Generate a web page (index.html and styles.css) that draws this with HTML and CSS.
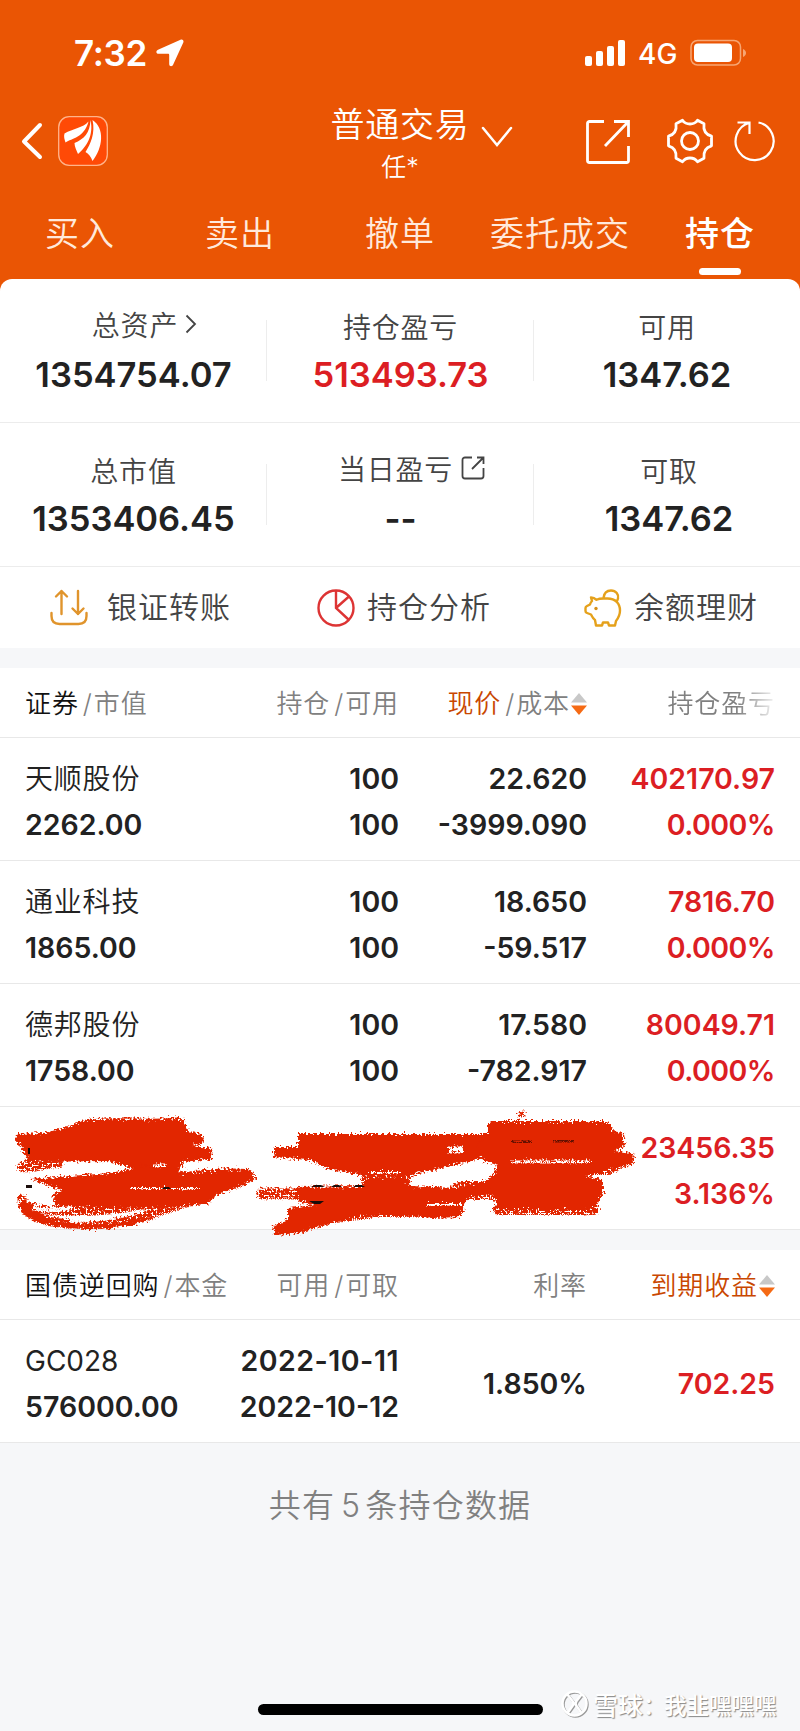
FILE: index.html
```html
<!DOCTYPE html>
<html lang="zh-CN">
<head>
    <meta charset="UTF-8">
    <meta name="viewport" content="width=device-width, initial-scale=1.0">
    <title>普通交易 - 持仓</title>
    <link rel="stylesheet" href="styles.css">
</head>
<body>
    <header class="header">
        <div class="status-bar">
            <span class="time">7:32</span>
            <svg class="location" width="28" height="28" viewBox="0 0 28 28"><path d="M24.500 .8 2 10.700C-.4 11.800 0 14.800 2.500 14.800H12c.8 0 1.200.4 1.200 1.200V25c0 2.600 2.900 3 3.900.8L27.300 3.600c.8-2-.8-3.600-2.800-2.800z" fill="#fff"/></svg>
            <div class="status-right">
                <svg width="41" height="26" viewBox="0 0 41 26" fill="#fff">
                    <rect x="0" y="16" width="7" height="10" rx="2"/>
                    <rect x="11" y="11" width="7" height="15" rx="2"/>
                    <rect x="22" y="6" width="7" height="20" rx="2"/>
                    <rect x="33" y="0" width="7" height="26" rx="2"/>
                </svg>
                <span class="network">4G</span>
                <svg width="57" height="28" viewBox="0 0 57 28">
                    <rect x="1" y="1.500" width="49.500" height="24.500" rx="6.500" fill="none" stroke="#f7a673" stroke-width="1.500"/>
                    <rect x="4" y="4.500" width="38" height="18.500" rx="4" fill="#fff"/>
                    <path d="M53 10v8c2-.8 3-2.300 3-4s-1-3.200-3-4z" fill="#f7a673"/>
                </svg>
            </div>
        </div>

        <div class="nav-bar">
            <svg class="back" width="22" height="38" viewBox="0 0 22 38"><path d="M19 3 3 19.500 19 35" fill="none" stroke="#fff" stroke-width="4" stroke-linecap="round" stroke-linejoin="round"/></svg>
            <svg class="logo" width="50" height="50" viewBox="0 0 50 50">
                <rect x=".7" y=".7" width="48.600" height="48.600" rx="10.500" fill="#ff4a06" stroke="#ffb48a" stroke-width="1.300"/>
                <g fill="#fff">
                    <path d="M30.500 5.500C25 12 15 12.500 6.500 17.500c-1 3 0 6 1 9C14 22 26 22 30.500 5.500z"/>
                    <path d="M32.500 4C32 17 26 23 16.500 27c0 4 2 7 3.500 11C28 31 36 20 32.500 4z"/>
                    <path d="M34.500 4c3 13-2 24-7 32 3 1.500 5.500 5 7 9C45 32 47 12 34.500 4z"/>
                </g>
            </svg>
            <div class="account">
                <div class="account-title">普通交易</div>
                <div class="account-name">任*</div>
            </div>
            <svg class="chevron" width="32" height="22" viewBox="0 0 32 22"><path d="M2 2l14 17L30 2" fill="none" stroke="#fff" stroke-width="2.500" stroke-linecap="round"/></svg>
            <div class="nav-icons">
                <svg width="46" height="46" viewBox="0 0 46 46" fill="none" stroke="#fff" stroke-width="2.800">
                    <path d="M19 2.500H4.500a2 2 0 0 0-2 2v37a2 2 0 0 0 2 2h37a2 2 0 0 0 2-2V27M29 2.500h14.500V18M43.500 2.500 20 27"/>
                </svg>
                <svg class="gear" width="46" height="46" viewBox="0 0 46 46" fill="none" stroke="#fff" stroke-width="2.800" stroke-linejoin="round">
                    <circle cx="23" cy="23" r="8.500"/>
                    <path d="M15.500 2.200c2 2.800 4 3.800 7.500 3.800s5.500-1 7.500-3.800l6.500 3.500c-.8 6 1.500 10.800 7.500 12.500v9.600c-6 1.700-8.300 6.500-7.500 12.500l-6.500 3.500c-2-2.800-4-3.800-7.500-3.800s-5.500 1-7.500 3.800L9 40.300c.8-6-1.500-10.800-7.500-12.500v-9.600C7.500 16.500 9.800 11.700 9 5.700z"/>
                </svg>
                <svg class="refresh" width="42" height="42" viewBox="0 0 42 42" fill="none" stroke="#fff" stroke-width="2.200">
                    <path d="M24.500 2.500A19 19 0 1 1 15.500 2.800M3.500 2.500h12V14"/>
                </svg>
            </div>
        </div>

        <nav class="tabs">
            <a class="tab">买入</a>
            <a class="tab">卖出</a>
            <a class="tab">撤单</a>
            <a class="tab">委托成交</a>
            <a class="tab active">持仓</a>
        </nav>
    </header>

    <main>
        <section class="summary">
            <div class="stat-row">
                <div class="stat">
                    <div class="stat-label raised">总资产<svg class="more" width="12" height="20" viewBox="0 0 12 20"><path d="M1.500 1.500 10 10l-8.500 8.500" fill="none" stroke="#444" stroke-width="1.800"/></svg></div>
                    <div class="stat-value">1354754.07</div>
                </div>
                <div class="stat">
                    <div class="stat-label">持仓盈亏</div>
                    <div class="stat-value red">513493.73</div>
                </div>
                <div class="stat">
                    <div class="stat-label">可用</div>
                    <div class="stat-value">1347.62</div>
                </div>
            </div>
            <div class="stat-row">
                <div class="stat">
                    <div class="stat-label">总市值</div>
                    <div class="stat-value">1353406.45</div>
                </div>
                <div class="stat">
                    <div class="stat-label raised">当日盈亏<svg class="share" width="24" height="24" viewBox="0 0 24 24" fill="none" stroke="#444" stroke-width="1.800"><path d="M11 1.500H4A2.500 2.500 0 0 0 1.500 4v16A2.500 2.500 0 0 0 4 22.500h16a2.500 2.500 0 0 0 2.500-2.500v-8M16 1.500h6.500V8M22.500 1.500 11 13"/></svg></div>
                    <div class="stat-value">--</div>
                </div>
                <div class="stat shifted">
                    <div class="stat-label">可取</div>
                    <div class="stat-value">1347.62</div>
                </div>
            </div>
            <div class="actions">
                <div class="action">
                    <svg width="38" height="38" viewBox="0 0 38 38" fill="none" stroke="#e0942c" stroke-width="2.400" stroke-linecap="round" stroke-linejoin="round">
                        <path d="M1.500 24v3c0 5 3 8 8 8h19c5 0 8-3 8-8v-3M11.500 25V2M6 7.500 11.500 2 17 7.500M28 2v23M22.500 19.500 28 25l5.500-5.500"/>
                    </svg>
                    <span class="action-text wide">银证转账</span>
                </div>
                <div class="action">
                    <svg width="38" height="38" viewBox="0 0 38 38" fill="none" stroke="#dd3434" stroke-width="2.400">
                        <circle cx="19" cy="19" r="17.500"/>
                        <path d="M19 1.500V19l13 12M19 19 32.500 7"/>
                    </svg>
                    <span class="action-text">持仓分析</span>
                </div>
                <div class="action">
                    <svg width="38" height="38" viewBox="0 0 38 38" fill="none" stroke="#e5a11b" stroke-width="2.400" stroke-linejoin="round">
                        <path d="M7 8.500c2.500 0 4 .8 5.500 2.300 2-1 4-1.300 7-1.300h4c8 0 12.500 5 12.500 12 0 5-2 8-4 10.500l-1 4.500h-6l-1-3h-5l-1 3h-6l-1-5.500c-2-1.200-3-3.500-4-5.500l-4-1.500c-1.300-.5-1.500-1-1.500-2v-3c0-1 .5-1.500 1.500-2l3-1.500c.5-2 1-2.500 2-3.500z"/>
                        <path d="M19.500 9C20 4.500 22.500 1.500 27 1.500c5 0 8 4 7 8-.3 1.500-1 2.500-2 3.500"/>
                        <circle cx="12" cy="19.500" r="1.700" fill="#d5901b" stroke="none"/>
                    </svg>
                    <span class="action-text">余额理财</span>
                </div>
            </div>
        </section>

        <section class="table">
            <div class="row head">
                <div><span class="dark">证券</span><i>/</i>市值</div>
                <div>持仓<i>/</i>可用</div>
                <div><span class="orange">现价</span><i>/</i>成本<svg class="sort" width="16" height="22" viewBox="0 0 16 22"><path d="M8 0l8 9.500H0z" fill="#c8c8c8"/><path d="M8 22l8-9.500H0z" fill="#f56a14"/></svg></div>
                <div class="fade">持仓盈亏</div>
            </div>
            <div class="row">
                <div><p class="name">天顺股份</p><p>2262.00</p></div>
                <div><p>100</p><p>100</p></div>
                <div><p>22.620</p><p>-3999.090</p></div>
                <div class="red"><p>402170.97</p><p class="percent">0.000%</p></div>
            </div>
            <div class="row">
                <div><p class="name">通业科技</p><p>1865.00</p></div>
                <div><p>100</p><p>100</p></div>
                <div><p>18.650</p><p>-59.517</p></div>
                <div class="red"><p>7816.70</p><p class="percent">0.000%</p></div>
            </div>
            <div class="row">
                <div><p class="name">德邦股份</p><p>1758.00</p></div>
                <div><p>100</p><p>100</p></div>
                <div><p>17.580</p><p>-782.917</p></div>
                <div class="red"><p>80049.71</p><p class="percent">0.000%</p></div>
            </div>
            <div class="row covered">
                <div class="red"><p>23456.35</p><p>3.136%</p></div>
                <!-- red crayon over the hidden holding -->
                <svg class="scribble" width="650" height="150" viewBox="0 0 650 150">
                    <defs>
                        <filter id="crayon" x="-5%" y="-5%" width="110%" height="110%" color-interpolation-filters="sRGB">
                            <feTurbulence type="fractalNoise" baseFrequency=".45" numOctaves="2" seed="4" result="noise"/>
                            <feDisplacementMap in="SourceGraphic" in2="noise" scale="9" xChannelSelector="R" yChannelSelector="G"/>
                        </filter>
                        <filter id="grain" x="-5%" y="-10%" width="110%" height="120%" color-interpolation-filters="sRGB">
                            <feTurbulence type="fractalNoise" baseFrequency=".5" numOctaves="2" seed="9" result="noise"/>
                            <feDisplacementMap in="SourceGraphic" in2="noise" scale="10" xChannelSelector="R" yChannelSelector="G" result="rough"/>
                            <feColorMatrix in="noise" values="0 0 0 0 0  0 0 0 0 0  0 0 0 0 0  0 12 0 0 -4.700" result="holes"/>
                            <feComposite in="rough" in2="holes" operator="in"/>
                        </filter>
                    </defs>
                    <g filter="url(#grain)" fill="none" stroke="#e22600" stroke-linecap="round">
                        <path d="M22 76c12 2 22-4 36-4" stroke-width="10"/>
                        <path d="M80 36c30-7 65 0 97-4" stroke-width="11"/>
                        <path d="M22 108c-2 28 65 28 98 22 24-4 46-11 66-18" stroke-width="9"/>
                        <path d="M30 117c45 9 105 1 148-8" stroke-width="8"/>
                        <path d="M172 90c28-4 50-7 75-5M200 97c15 0 28-4 40-8" stroke-width="14"/>
                        <path d="M262 103h45" stroke-width="11"/>
                        <path d="M365 82h45M366 90h40" stroke-width="10"/>
                        <path d="M370 121h80M320 130c18-4 36-6 50-7" stroke-width="10"/>
                        <path d="M445 55h45M460 100h40" stroke-width="18"/>
                        <path d="M494 35h110M498 119h96M500 79h108l22-11" stroke-width="10"/>
                        <path d="M520 22l4 3M524 21l-4 5" stroke-width="3"/>
                    </g>
                    <g filter="url(#crayon)" fill="#e22600">
                        <path d="M17 43l28-1 25-7 18-5 95-1 5 11 14 3 2 9-12 3 19 2 1 11-30 3-16 6-32 1-26-8-80 1-8-17-4-1z"/>
                        <path d="M142 72h42l-10 14h-34z"/>
                        <path d="M30 88l80-6 30-6 30-2 12 9 48-3 18-1 8 9-20 8-21 9-7 8-38 3-70 1-43-1-5-13 10-4z"/>
                        <path d="M20 112c3 20 30 22 50 25 40 4 70-4 90-11l-20 1c-24 8-56 7-74 5-18-3-28-9-32-19z"/>
                        <path d="M298 43h192v21l-22 7-35 8-32 7-30-1-40-6-22-10-36-3 2-10h23z"/>
                        <path d="M297 96l65-1 5-8h36l8 8 48 2 35-10v15l-27 5-7 19-28 1-32-3h-30l-30 5-40 13-25 2-3-8 16-8v-11l27-3-18-4z"/>
                        <path d="M488 32h122l3 8 10 2 2 13-10 5 17 2 1 11-21 4-17 6-10 2 17 4 2 12-7 13-10 4h-90l-3-16-10-9 9-10 6-8-16-6-6-16 11-8z"/>
                    </g>
                    <g filter="url(#grain)" fill="none" stroke="#fff">
                        <path d="M449 59h14" stroke-width="7"/>
                        <path d="M510 71h80M153 75h14" stroke-width="3"/>
                        <path d="M130 98h70M426 114h36M370 82h30" stroke-width="2"/>
                        <path d="M32 117c12 4 25 2 40 0M70 130c24 0 46-3 72-10" stroke-width="4"/>
                    </g>
                    <g filter="url(#grain)" fill="none" stroke="#641000" stroke-width="3">
                        <path d="M512 51h20M552 50h22"/>
                    </g>
                    <g fill="#1a0d0a">
                        <path d="M28 57h2v6h-2zM26 94h6v3h-6zM311 96l4-2h6l4 2zM331 96l3-2h5l3 2zM353 96l3-2h6l3 2zM309 110l5 3h6l4-3zM162 98l2-2h5l2 2z"/>
                    </g>
                </svg>
            </div>
        </section>

        <section class="table">
            <div class="row head">
                <div><span class="dark">国债逆回购</span><i>/</i>本金</div>
                <div>可用<i>/</i>可取</div>
                <div>利率</div>
                <div class="orange">到期收益<svg class="sort" width="16" height="22" viewBox="0 0 16 22"><path d="M8 0l8 9.500H0z" fill="#c8c8c8"/><path d="M8 22l8-9.500H0z" fill="#f56a14"/></svg></div>
            </div>
            <div class="row">
                <div><p class="name code">GC028</p><p>576000.00</p></div>
                <div><p class="date">2022-10-11</p><p>2022-10-12</p></div>
                <div><p>1.850%</p></div>
                <div class="red"><p>702.25</p></div>
            </div>
        </section>

        <p class="total">共有<span>5</span>条持仓数据</p>
    </main>

    <footer class="footer">
        <div class="home-bar"></div>
        <div class="watermark">
            <svg width="30" height="32" viewBox="0 0 30 32" fill="none">
                <g stroke="#999" stroke-width="2.500"><circle cx="15.500" cy="16.500" r="12"/><path d="M8.500 7.500l5 6.500c1.500 2 1.500 3 0 5l-5 7M22.500 7.500l-5 6.500c-1.500 2-1.500 3 0 5l5 7"/></g>
                <g stroke="#fff" stroke-width="2.500"><circle cx="14.500" cy="15.500" r="12"/><path d="M7.500 6.500l5 6.500c1.500 2 1.500 3 0 5l-5 7M21.500 6.500l-5 6.500c-1.500 2-1.500 3 0 5l5 7"/></g>
            </svg>
            <span class="site">雪球</span><span class="colon">：</span><span>我韭嘿嘿嘿</span>
        </div>
    </footer>
</body>
</html>
```
FILE: styles.css
```css
* {
    box-sizing: border-box;
}
body {
    margin: 0;
    width: 800px;
    height: 1731px;
    display: flex;
    flex-direction: column;
    overflow: hidden;
    background: #f6f7f9;
    color: #222;
    font-family: Inter, "Noto Sans CJK SC", sans-serif;
    white-space: nowrap;
}
p {
    margin: 0;
}
svg {
    display: block;
    flex: none;
}

/* header */
.header {
    height: 291px;
    background: #ea5504;
    color: #fff;
}
.status-bar {
    display: flex;
    align-items: center;
    height: 106px;
    padding: 0 53px 0 74px;
}
.time {
    width: 73px;
    font-size: 35px;
    font-weight: 600;
    letter-spacing: -0.3px;
}
.location {
    margin-left: 9px;
}
.status-right {
    display: flex;
    align-items: center;
    margin-left: auto;
}
.network {
    width: 64px;
    padding: 2px 0 0 12px;
    font-size: 28px;
    font-weight: 500;
}
.nav-bar {
    display: flex;
    height: 92px;
    padding: 0 24px 0 21px;
}
.back {
    margin-top: 16px;
}
.logo {
    margin: 10px 0 0 15px;
}
.account {
    width: 140px;
    margin-left: 222px;
    text-align: center;
    font-weight: 350;
}
.account-title {
    line-height: 38px;
    font-size: 34px;
    letter-spacing: 0.8px;
}
.account-name {
    line-height: 46px;
    font-size: 25px;
}
.chevron {
    margin: 20px 0 0 11px;
}
.nav-icons {
    display: flex;
    margin-left: auto;
}
.nav-icons svg {
    margin-top: 13px;
}
.nav-icons .gear {
    margin: 12px 0 0 36px;
}
.nav-icons .refresh {
    margin: 14px 0 0 21px;
}
.tabs {
    display: flex;
}
.tab {
    width: 160px;
    height: 81px;
    display: flex;
    flex-direction: column;
    align-items: center;
    padding-top: 11px;
    line-height: 50px;
    font-size: 34px;
    font-weight: 350;
    letter-spacing: 1px;
    color: #ffe9dc;
}
.tab.active {
    font-weight: 500;
    color: #fff;
}
.tab.active::after {
    content: "";
    width: 42px;
    height: 7px;
    margin-top: 9px;
    border-radius: 4px;
    background: #fff;
}

/* account summary */
.summary {
    position: relative;
    margin-top: -12px;
    border-radius: 12px 12px 0 0;
    background: #fff;
}
.stat-row {
    display: grid;
    grid-template-columns: 267px 267px 266px;
    height: 144px;
    border-bottom: 1px solid #ececec;
}
.stat {
    display: flex;
    flex-direction: column;
    align-items: center;
    padding-top: 27px;
    background: linear-gradient(#ededed, #ededed) right 41px / 1px 61px no-repeat;
}
.stat:last-child {
    background: none;
}
.stat.shifted {
    padding-left: 4px;
}
.stat-label {
    display: flex;
    align-items: center;
    height: 40px;
    font-size: 28px;
    font-weight: 350;
    letter-spacing: 0.8px;
    color: #444;
}
.stat-label.raised {
    margin: -2px 0 2px 22px;
}
.more {
    margin-left: 7px;
}
.share {
    margin-left: 8px;
}
.stat-value {
    line-height: 58px;
    font-size: 34.5px;
    font-weight: 600;
}
.red {
    color: #dc1e23;
}
.orange {
    color: #c94700;
}
.dark {
    color: #111;
}
.actions {
    display: grid;
    grid-template-columns: 267px 267px 1fr;
    height: 81px;
    padding-left: 50px;
}
.action {
    display: flex;
    align-items: center;
}
.action-text {
    margin: -5px 0 0 12px;
    font-size: 30px;
    font-weight: 350;
    letter-spacing: 1px;
    color: #444;
}
.action-text.wide {
    margin-left: 19px;
}

/* holdings */
.table {
    margin-top: 20px;
    background: #fff;
}
.row {
    position: relative;
    display: grid;
    grid-template-columns: 190px 184px 188px 188px;
    align-items: center;
    height: 123px;
    padding: 5px 25px 0;
    border-bottom: 1px solid #e8e8e8;
    line-height: 46px;
    font-size: 28.5px;
    font-weight: 600;
    text-align: right;
}
.row > div:first-child {
    text-align: left;
}
.row .name {
    font-size: 28px;
    font-weight: 350;
    letter-spacing: 0.8px;
}
.row .code {
    font-weight: 400;
    letter-spacing: 0;
}
.row .percent {
    letter-spacing: -0.5px;
}
.row .date {
    letter-spacing: 0.5px;
}
.row.head {
    height: 70px;
    padding-top: 2px;
    font-size: 26px;
    font-weight: 350;
    letter-spacing: 0.9px;
    color: #808080;
}
.row.head > div {
    display: flex;
    align-items: center;
    justify-content: flex-end;
}
.row.head > div:first-child {
    justify-content: flex-start;
}
.row.head .orange {
    color: #c94700;
}
.head i {
    padding: 0 1px 0 4px;
    font-style: normal;
}
.row.head .fade {
    -webkit-mask-image: linear-gradient(to right, #000 150px, transparent 192px);
    mask-image: linear-gradient(to right, #000 150px, transparent 192px);
}
.sort {
    margin-left: 1px;
}
.row.covered > .red {
    grid-column: 4;
    text-align: right;
}
.scribble {
    position: absolute;
    left: 0;
    top: -16px;
}
.total {
    margin-top: 35px;
    text-align: center;
    line-height: 56px;
    font-size: 32px;
    font-weight: 350;
    letter-spacing: 1.2px;
    color: #808080;
}
.total span {
    padding: 0 4px 0 6px;
}

/* bottom */
.footer {
    display: flex;
    align-items: center;
    height: 42px;
    margin-top: auto;
    margin-bottom: 5px;
    padding-left: 258px;
}
.home-bar {
    width: 285px;
    height: 11px;
    margin-top: 8px;
    border-radius: 6px;
    background: #000;
}
.watermark {
    display: flex;
    align-items: center;
    margin: -2px 0 0 17px;
    font-size: 22.5px;
    font-weight: 500;
    color: #fff;
    text-shadow: 1px 1px 1px #888;
}
.site {
    margin-left: 3px;
    font-size: 25px;
}
.colon {
    width: 21px;
}
```
